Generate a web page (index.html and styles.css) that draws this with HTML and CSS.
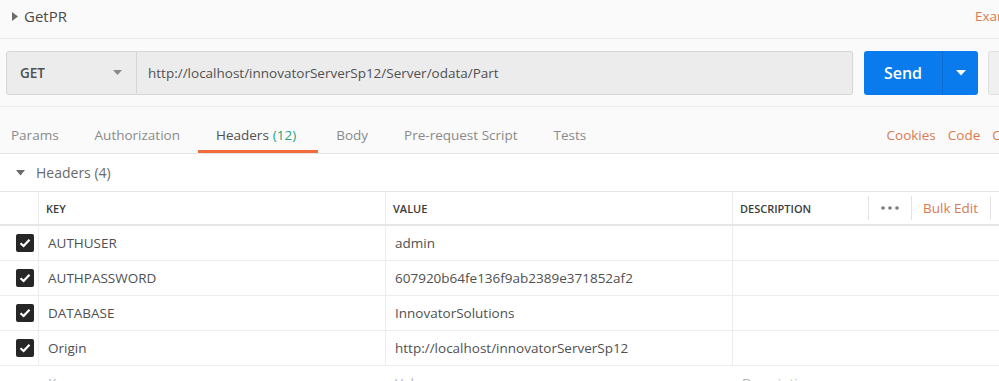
FILE: index.html
```html
<!DOCTYPE html>
<html lang="en">
<head>
  <meta charset="UTF-8" />
  <title>GetPR</title>
  <link rel="stylesheet" href="styles.css">
</head>
<body>
  <div class="app">
    <div class="title-bar">
      <svg class="title-caret" width="6" height="9" viewBox="0 0 6 9"><polygon points="0,0 6,4.5 0,9" fill="#6b6b6b"/></svg>
      <span class="title">GetPR</span>
      <span class="examples">Examples</span>
    </div>

    <div class="url-bar">
      <div class="method">
        <span>GET</span>
        <svg width="9" height="6" viewBox="0 0 9 6"><polygon points="0,0 9,0 4.5,5" fill="#8a8a8a"/></svg>
      </div>
      <div class="url-input">http://localhost/innovatorServerSp12/Server/odata/Part</div>
      <div class="send">
        <span class="send-label">Send</span>
        <span class="send-more">
          <svg width="10" height="6" viewBox="0 0 10 6"><polygon points="0,0 10,0 5,5.5" fill="#fff"/></svg>
        </span>
      </div>
      <div class="save"></div>
    </div>

    <div class="tabs">
      <span class="tab first">Params</span>
      <span class="tab">Authorization</span>
      <span class="tab active">Headers <span class="count">(12)</span></span>
      <span class="tab">Body</span>
      <span class="tab">Pre-request Script</span>
      <span class="tab">Tests</span>
      <div class="tab-links">
        <span>Cookies</span>
        <span>Code</span>
        <span>Comments</span>
      </div>
    </div>

    <div class="section">
      <div class="section-head">
        <svg width="9" height="6" viewBox="0 0 9 6"><polygon points="0,0 9,0 4.5,5.5" fill="#6b6b6b"/></svg>
        <span>Headers (4)</span>
      </div>

      <div class="table">
        <div class="row head">
          <div class="cell check"></div>
          <div class="cell key">KEY</div>
          <div class="cell value">VALUE</div>
          <div class="cell desc">
            <span class="desc-title">DESCRIPTION</span>
            <span class="head-tool dots">
              <svg width="18" height="4" viewBox="0 0 18 4"><circle cx="2" cy="2" r="1.8" fill="#7a7a7a"/><circle cx="9" cy="2" r="1.8" fill="#7a7a7a"/><circle cx="16" cy="2" r="1.8" fill="#7a7a7a"/></svg>
            </span>
            <span class="head-tool bulk">Bulk Edit</span>
            <span class="head-tool last"></span>
          </div>
        </div>

        <div class="row">
          <div class="cell check"><span class="box"><svg width="12" height="10" viewBox="0 0 12 10"><path d="M1.5 5.2 L4.6 8 L10.5 1.8" stroke="#fff" stroke-width="2.2" fill="none"/></svg></span></div>
          <div class="cell key">AUTHUSER</div>
          <div class="cell value">admin</div>
          <div class="cell desc"></div>
        </div>
        <div class="row">
          <div class="cell check"><span class="box"><svg width="12" height="10" viewBox="0 0 12 10"><path d="M1.5 5.2 L4.6 8 L10.5 1.8" stroke="#fff" stroke-width="2.2" fill="none"/></svg></span></div>
          <div class="cell key">AUTHPASSWORD</div>
          <div class="cell value">607920b64fe136f9ab2389e371852af2</div>
          <div class="cell desc"></div>
        </div>
        <div class="row">
          <div class="cell check"><span class="box"><svg width="12" height="10" viewBox="0 0 12 10"><path d="M1.5 5.2 L4.6 8 L10.5 1.8" stroke="#fff" stroke-width="2.2" fill="none"/></svg></span></div>
          <div class="cell key">DATABASE</div>
          <div class="cell value">InnovatorSolutions</div>
          <div class="cell desc"></div>
        </div>
        <div class="row">
          <div class="cell check"><span class="box"><svg width="12" height="10" viewBox="0 0 12 10"><path d="M1.5 5.2 L4.6 8 L10.5 1.8" stroke="#fff" stroke-width="2.2" fill="none"/></svg></span></div>
          <div class="cell key">Origin</div>
          <div class="cell value">http://localhost/innovatorServerSp12</div>
          <div class="cell desc"></div>
        </div>
        <div class="row placeholder">
          <div class="cell check"></div>
          <div class="cell key">Key</div>
          <div class="cell value">Value</div>
          <div class="cell desc">Description</div>
        </div>
      </div>
    </div>
  </div>
</body>
</html>
```

FILE: styles.css
```css
* {
  box-sizing: border-box;
  margin: 0;
  padding: 0;
}

body {
  font-family: 'Open Sans', 'Noto Sans', sans-serif;
  font-size: 13.5px;
  color: #505050;
  background: #fafafa;
  overflow: hidden;
}

.app {
  width: 1100px;
}

/* title */
.title-bar {
  display: flex;
  align-items: center;
  height: 39px;
  padding: 0 0 6px 12px;
  border-bottom: 1px solid #ececec;
}

.title-caret {
  margin-right: 6px;
}

.title {
  font-size: 15px;
  color: #4a4a4a;
}

.examples {
  margin-left: 908px;
  color: #d97a52;
}

/* url */
.url-bar {
  display: flex;
  height: 68px;
  padding: 12px 0 11px 6px;
  border-bottom: 1px solid #ececec;
}

.method {
  width: 131px;
  display: flex;
  align-items: center;
  justify-content: space-between;
  padding: 0 14px 0 13px;
  background: #ececec;
  border: 1px solid #d6d6d6;
  border-radius: 3px 0 0 3px;
  font-weight: 600;
  color: #505050;
}

.url-input {
  width: 716px;
  display: flex;
  align-items: center;
  padding-left: 11px;
  background: #ececec;
  border: 1px solid #d6d6d6;
  border-left: none;
  border-radius: 0 3px 3px 0;
  color: #505050;
}

.send {
  width: 114px;
  margin-left: 11px;
  display: flex;
  background: #097bed;
  border-radius: 3px;
  color: #fff;
}

.send-label {
  width: 79px;
  display: flex;
  align-items: center;
  justify-content: center;
  font-size: 16px;
  font-weight: 600;
  border-right: 1px solid #0a6bd0;
}

.send-more {
  flex: 1;
  display: flex;
  align-items: center;
  justify-content: center;
}

.save {
  width: 100px;
  margin-left: 10px;
  background: #f0f0f0;
  border: 1px solid #e0e0e0;
  border-radius: 3px;
}

/* tabs */
.tabs {
  display: flex;
  height: 47px;
  padding-right: 39px;
  border-bottom: 1px solid #e4e4e4;
}

.tab {
  display: flex;
  align-items: center;
  padding: 12px 18px 0;
  border-bottom: 3px solid transparent;
  color: #8a8a8a;
}

.tab.first {
  padding-left: 11px;
}

.tab.active {
  padding: 12px 22px 0 18px;
  color: #505050;
  border-bottom-color: #f26b3a;
}

.count {
  color: #26a37f;
  margin-left: 4px;
}

.tab-links {
  display: flex;
  align-items: center;
  gap: 12px;
  margin-left: auto;
  padding-top: 9px;
  color: #d97a52;
}

/* headers section */
.section {
  background: #fff;
}

.section-head {
  display: flex;
  align-items: center;
  gap: 11px;
  height: 37px;
  padding-left: 16px;
  font-size: 14px;
  color: #6a6a6a;
}

.row {
  display: flex;
  height: 35px;
  border-bottom: 1px solid #ececec;
}

.row.head {
  border-top: 1px solid #e6e6e6;
  border-bottom: 2px solid #e6e6e6;
  font-size: 11px;
  font-weight: 600;
  color: #3c3c3c;
}

.cell {
  display: flex;
  align-items: center;
  padding-left: 9px;
  border-right: 1px solid #ececec;
}

.head .cell {
  padding-left: 7px;
}

.cell.check {
  width: 39px;
  padding-left: 16px;
}

.head .cell.check {
  padding-left: 0;
}

.cell.key,
.cell.value {
  width: 347px;
}

.cell.desc {
  flex: 1;
  border-right: none;
}

.desc-title {
  width: 128px;
}

.head-tool {
  display: flex;
  align-items: center;
  height: 24px;
  border-left: 1px solid #e4e4e4;
}

.dots {
  width: 43px;
  justify-content: center;
}

.bulk {
  width: 79px;
  padding-left: 11px;
  font-size: 13.5px;
  font-weight: 400;
  color: #d97a52;
}

.last {
  width: 40px;
}

.box {
  width: 18px;
  height: 18px;
  border-radius: 2px;
  background: #262626;
  display: flex;
  align-items: center;
  justify-content: center;
}

.placeholder {
  color: #b4b4b4;
}

.placeholder .cell {
  border-right: none;
}
```
